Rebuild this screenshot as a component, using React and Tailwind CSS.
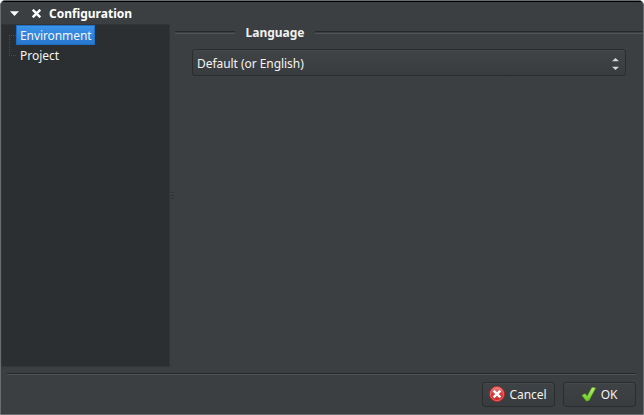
import React from "react";

function TitleBar() {
  return (
    <header className="flex h-[22px] shrink-0 items-center pl-[9px]">
      <svg className="mt-px mr-[13px] h-[5px] w-[9px]" viewBox="0 0 9 5" fill="#fff">
        <path d="M0 0.3H9L4.5 4.9Z" />
      </svg>
      <svg className="mt-px mr-[8px] h-[9px] w-[9px]" viewBox="0 0 9 9" stroke="#fff" strokeWidth="2.4">
        <path d="M0.7 0.7L8.3 8.3M8.3 0.7L0.7 8.3" />
      </svg>
      <h1 className="pt-[2px] text-[12px] leading-[20px] font-bold text-white">Configuration</h1>
    </header>
  );
}

function Sidebar() {
  return (
    <nav className="flex w-[169px] shrink-0 border border-[#313536] bg-[#2b2f31] pl-[7px]">
      <div className="mt-[10px] h-[21px] w-[7px] shrink-0 border-y border-l border-dotted border-[#464b4e]" />
      <ul className="flex flex-col items-start text-[12px] text-[#f4f4f4]">
        <li className="h-[20px] w-[79px] border border-[#1f6fc4] bg-linear-to-b from-[#3b93ea] to-[#2877cf] px-[3px] leading-[19px] tracking-[-0.08px]">
          Environment
        </li>
        <li className="h-[20px] px-[4px] leading-[21px]">Project</li>
      </ul>
    </nav>
  );
}

function GroupHeading({ children }) {
  return (
    <div className="flex h-[17px] items-center">
      <span className="h-[3px] w-[60px] border-t border-b border-t-[#25292a] border-b-[#505456]" />
      <h2 className="w-[80px] text-center text-[12px] leading-[17px] font-bold text-[#f0f0f0]">{children}</h2>
      <span className="h-[3px] flex-1 border-t border-b border-t-[#25292a] border-b-[#505456]" />
    </div>
  );
}

function DialogButton({ icon, label }) {
  return (
    <button className="flex h-[25px] w-[73px] items-center justify-center gap-[4px] rounded-[3px] border border-[#292d2e] bg-linear-to-b from-[#3f4345] to-[#383c3e] pr-px text-[12px] text-[#f2f2f2] shadow-[inset_0_1px_0_#45494b]">
      {icon}
      <span className="leading-[17px] tracking-[-0.05px]">{label}</span>
    </button>
  );
}

function CancelIcon() {
  return (
    <svg className="-mt-px h-4 w-4" viewBox="0 0 16 16">
      <defs>
        <linearGradient id="red" x2="0" y2="1">
          <stop stopColor="#f08c8c" />
          <stop offset=".5" stopColor="#d93838" />
          <stop offset="1" stopColor="#d02a2a" />
        </linearGradient>
      </defs>
      <circle cx="8" cy="8" r="7.5" fill="url(#red)" stroke="#c02626" strokeWidth=".9" />
      <circle cx="8" cy="8" r="6.6" fill="none" stroke="#ec7a7a" strokeWidth=".7" />
      <path d="M4.6 4.6L11.4 11.4M11.4 4.6L4.6 11.4" stroke="#fff" strokeWidth="2.5" />
    </svg>
  );
}

function OkIcon() {
  return (
    <svg className="-mt-px h-4 w-4" viewBox="0 0 16 16">
      <defs>
        <linearGradient id="green" x2="0" y2="1">
          <stop stopColor="#c0f36c" />
          <stop offset="1" stopColor="#62cb1c" />
        </linearGradient>
      </defs>
      <path d="M1 9.2L4.2 7.8L6.2 10.2L11 1.5L14.6 2L8 14.4L5.3 15Z" fill="url(#green)" stroke="#62b323" strokeWidth=".6" />
    </svg>
  );
}

export default function App() {
  return (
    <div className="h-[415px] w-[644px] bg-white font-['Noto_Sans',sans-serif]">
      <div className="flex h-full flex-col overflow-hidden rounded-t-[5px] border border-[#696d6d] bg-[#3b3f41]">
        <div className="h-px shrink-0 bg-black" />
        <TitleBar />
        <div className="flex h-[343px] shrink-0">
          <Sidebar />
          <div className="flex w-[5px] flex-col items-center justify-center gap-[2px]">
            <i className="h-px w-[3px] bg-[#2f3335]" />
            <i className="h-px w-[3px] bg-[#2f3335]" />
            <i className="h-px w-[3px] bg-[#2f3335]" />
          </div>
          <main className="flex-1">
            <GroupHeading>Language</GroupHeading>
            <div className="mt-[8px] mr-[17px] ml-[17px] flex h-[27px] items-center justify-between rounded-[3px] border border-[#292d2e] bg-linear-to-b from-[#404446] to-[#383c3e] pr-[6px] pl-[4px] shadow-[inset_0_1px_0_#45494b]">
              <span className="pt-[2px] text-[12px] leading-[17px] tracking-[-0.05px] text-[#f4f4f4]">Default (or English)</span>
              <svg className="mt-[2px] h-[12px] w-[7px]" viewBox="0 0 7 12" fill="#d5d7d6">
                <path d="M3.5 0L7 3.3H0ZM0 8.7H7L3.5 12Z" />
              </svg>
            </div>
          </main>
        </div>
        <footer className="pt-[6px] pr-[7px] pl-[6px]">
          <div className="h-[2px] border-t border-b border-t-[#25292a] border-b-[#505456]" />
          <div className="mt-[7px] flex justify-end gap-[8px]">
            <DialogButton icon={<CancelIcon />} label="Cancel" />
            <DialogButton icon={<OkIcon />} label="OK" />
          </div>
        </footer>
      </div>
    </div>
  );
}
